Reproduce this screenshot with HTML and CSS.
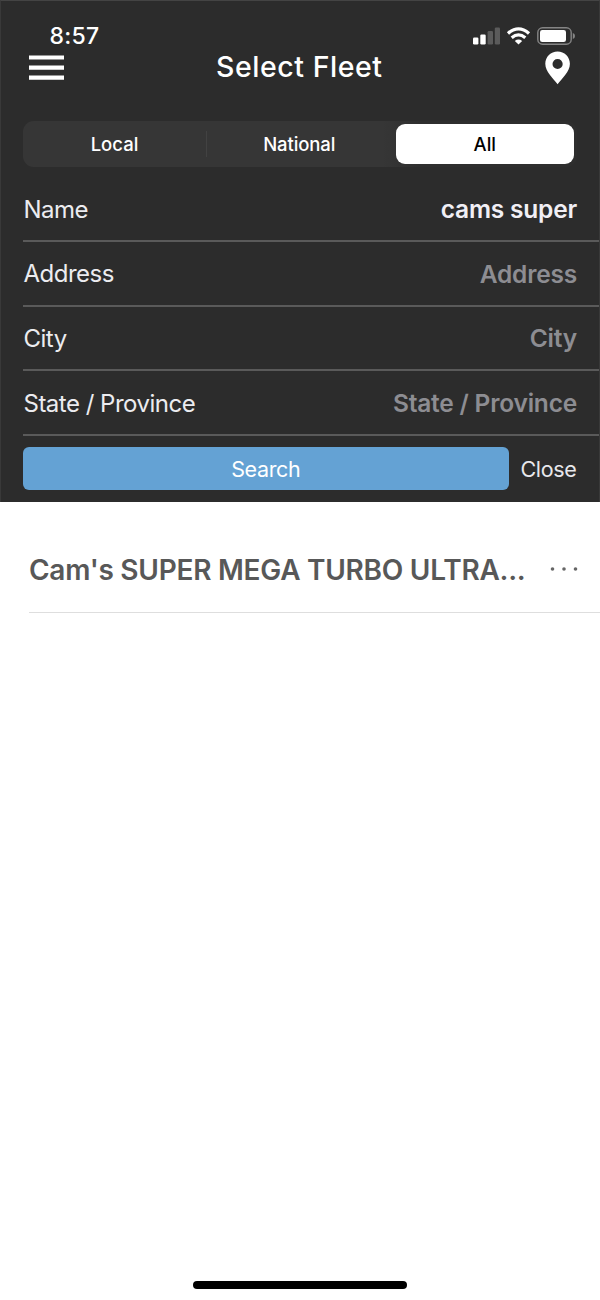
FILE: index.html
```html
<!DOCTYPE html>
<html lang="en">
<head>
<meta charset="utf-8">
<title>Select Fleet</title>
<link rel="stylesheet" href="styles.css">
</head>
<body>
<main class="screen">
  <section class="panel">
    <div class="status">
      <span class="time">8:57</span>
      <svg class="status-icons" width="104" height="20" viewBox="0 0 104 20">
        <g fill="#fff">
          <rect x="1" y="10.5" width="5.4" height="7" rx="1.2"/>
          <rect x="8.3" y="7.6" width="5.4" height="9.9" rx="1.2"/>
          <g fill="#5b5b5b"><rect x="15.6" y="4" width="5.4" height="13.5" rx="1.2"/><rect x="22.8" y="0.5" width="5.2" height="17" rx="1.2"/></g>
          <path d="M46.5 17.6 L42.8 14 Q46.5 11.2 50.2 14 Z"/>
        </g>
        <g fill="none" stroke="#fff" stroke-width="3.3">
          <path d="M36 6.4 Q46.5 -2.7 57 6.4"/>
          <path d="M39.7 10.7 Q46.5 5 53.3 10.7"/>
        </g>
        <rect x="65.8" y="0.8" width="33.4" height="16.4" rx="4.8" fill="none" stroke="#858585" stroke-width="1.4"/>
        <rect x="68" y="3" width="26" height="12" rx="2.3" fill="#fff"/>
        <path d="M100.8 6 Q103 6.6 103 9 Q103 11.4 100.8 12 Z" fill="#858585"/>
      </svg>
    </div>
    <header class="nav">
      <svg class="menu" width="36" height="26" viewBox="0 0 36 26"><path fill="#fff" d="M0 .4h35v4.2H0zM0 10.4h35v4.3H0zM0 20.4h35v4.3H0z"/></svg>
      <h1 class="title">Select Fleet</h1>
      <svg class="pin" width="26" height="34" viewBox="0 0 26 34"><path fill="#fff" fill-rule="evenodd" d="M12.6.5C5.8.5.3 5.8.3 12.7c0 8.1 8 14.6 12.3 20.5 4.3-5.9 12.3-12.4 12.3-20.5C24.9 5.8 19.4.5 12.6.5zm0 7.4a5.1 5.1 0 1 1 0 10.2 5.1 5.1 0 0 1 0-10.2z"/></svg>
    </header>
    <div class="segments">
      <span class="segment">Local</span>
      <span class="divider"></span>
      <span class="segment national">National</span>
      <span class="segment selected">All</span>
    </div>
    <div class="fields">
      <div class="field"><span class="label">Name</span><span class="value typed">cams super</span></div>
      <div class="field"><span class="label">Address</span><span class="value hint">Address</span></div>
      <div class="field"><span class="label">City</span><span class="value hint">City</span></div>
      <div class="field"><span class="label">State / Province</span><span class="value hint">State / Province</span></div>
    </div>
    <div class="actions">
      <span class="search">Search</span>
      <span class="close">Close</span>
    </div>
  </section>
  <section class="results">
    <div class="result">
      <span class="fleet">Cam's SUPER MEGA TURBO ULTRA...</span>
      <svg class="more" width="30" height="6" viewBox="0 0 30 6" fill="#666"><circle cx="3.5" cy="3" r="1.8"/><circle cx="15" cy="3" r="1.8"/><circle cx="26.5" cy="3" r="1.8"/></svg>
    </div>
  </section>
  <div class="home"></div>
</main>
</body>
</html>
```
FILE: styles.css
```css
* { box-sizing: border-box; }
body { margin: 0; background: #fff; font-family: Inter, "Liberation Sans", sans-serif; }
.screen { width: 600px; height: 1300px; display: flex; flex-direction: column; }
.panel { height: 502px; background: #2c2c2c; border-top: 1px solid #444; border-left: 1px solid #393939; border-right: 1px solid #393939; padding-left: 22px; }
.status { height: 50px; display: flex; justify-content: space-between; padding: 26px 23px 0 26.5px; }
.time { font-size: 23px; font-weight: 500; line-height: 19px; color: #fff; letter-spacing: 0.3px; }
.nav { height: 70px; display: flex; align-items: flex-start; padding: 0 28px 0 6px; }
.menu { margin-top: 4px; }
.title { margin: 0 0 0 151px; font-size: 28.5px; font-weight: 500; line-height: 32px; color: #fff; letter-spacing: 0.55px; white-space: nowrap; }
.pin { margin-left: auto; }
.segments { width: 554px; height: 45.5px; border-radius: 11px; background: linear-gradient(90deg, #363636 65%, #2e2e2e 72%); display: grid; grid-template-columns: 183px 1px 188.5px 178.5px; align-items: center; color: #fff; font-size: 18.5px; font-weight: 500; }
.segment { text-align: center; line-height: 40px; }
.national { padding-right: 4px; letter-spacing: -0.1px; }
.divider { height: 26px; background: #424242; }
.selected { height: 40.5px; background: #fff; color: #000; border-radius: 9px; }
.fields { padding-top: 10.7px; }
.field { height: 64.7px; border-bottom: 2px solid #5a5a5a; padding: 1px 22px 0 0; display: flex; align-items: center; justify-content: space-between; white-space: nowrap; }
.label { color: #ececf0; font-size: 24px; letter-spacing: -0.5px; padding-left: 0.5px; }
.value { font-size: 24.5px; font-weight: 600; letter-spacing: -0.2px; }
.typed { color: #f1eff5; }
.hint { color: #8d8d92; }
.actions { padding-top: 11px; display: flex; gap: 12px; align-items: center; font-size: 21.5px; letter-spacing: -0.35px; }
.search { width: 485.5px; height: 43px; border-radius: 6px; background: #64a2d4; color: #fff; text-align: center; line-height: 45px; }
.close { color: #e8e8ec; padding-top: 1px; }
.results { flex: 1; }
.result { margin-left: 29px; height: 111px; padding: 24px 21px 0 0; border-bottom: 1px solid #dedede; display: flex; align-items: center; justify-content: space-between; }
.fleet { font-size: 28px; font-weight: 600; color: #585858; letter-spacing: -0.26px; padding-top: 2px; white-space: nowrap; }
.home { width: 214.5px; height: 7.5px; border-radius: 4px; background: #000; margin: 0 auto 11.5px 192.5px; }
```
